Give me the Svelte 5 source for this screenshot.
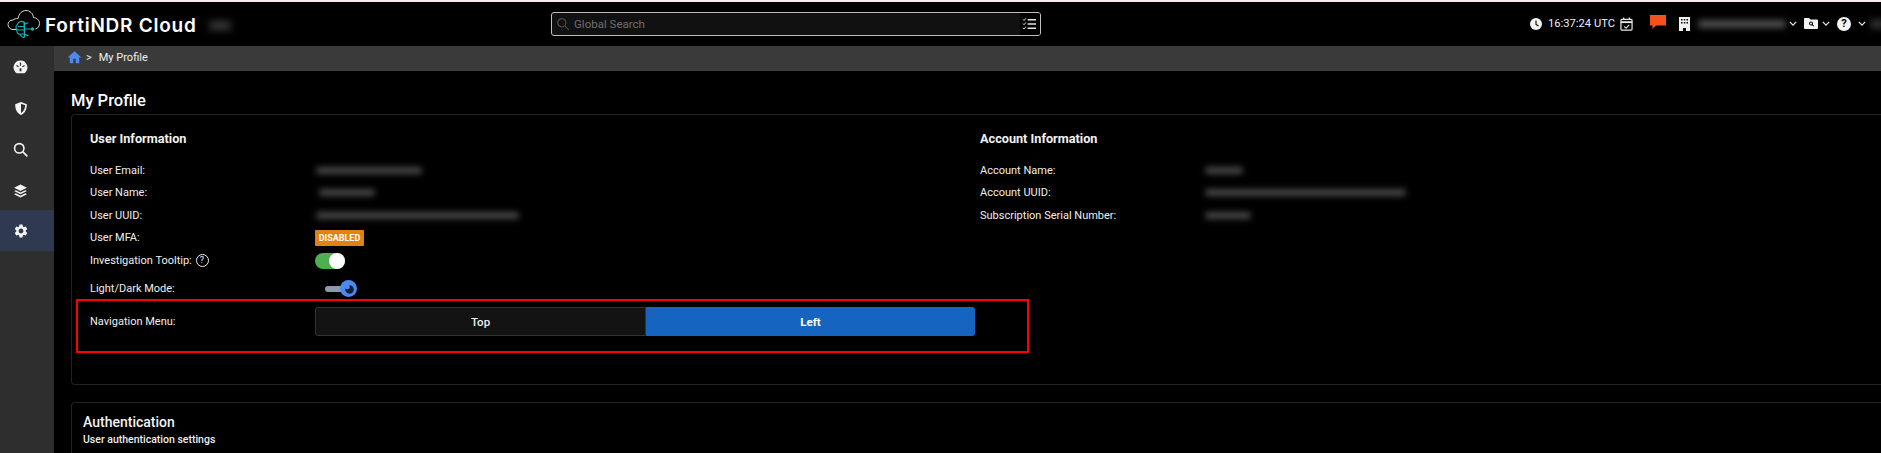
<script>
  const userRows = [
    { label: 'User Email:', blur: 106, left: 1 },
    { label: 'User Name:', blur: 56, left: 4 },
    { label: 'User UUID:', blur: 203, left: 1 }
  ];
  const accRows = [
    { label: 'Account Name:', blur: 38, left: 0 },
    { label: 'Account UUID:', blur: 201, left: 0 },
    { label: 'Subscription Serial Number:', blur: 46, left: 0 }
  ];
  const cog = 'M19.14 12.94c.04-.3.06-.61.06-.94 0-.32-.02-.64-.07-.94l2.03-1.58c.18-.14.23-.41.12-.61l-1.92-3.32c-.12-.22-.37-.29-.59-.22l-2.39.96c-.5-.38-1.03-.7-1.62-.94l-.36-2.54c-.04-.24-.24-.41-.48-.41h-3.84c-.24 0-.43.17-.47.41l-.36 2.54c-.59.24-1.13.57-1.62.94l-2.39-.96c-.22-.08-.47 0-.59.22L2.74 8.87c-.12.21-.08.47.12.61l2.03 1.58c-.05.3-.09.63-.09.94s.02.64.07.94l-2.03 1.58c-.18.14-.23.41-.12.61l1.92 3.32c.12.22.37.29.59.22l2.39-.96c.5.38 1.03.7 1.62.94l.36 2.54c.05.24.24.41.48.41h3.84c.24 0 .44-.17.47-.41l.36-2.54c.59-.24 1.13-.56 1.62-.94l2.39.96c.22.08.47 0 .59-.22l1.92-3.32c.12-.22.07-.47-.12-.61l-2.01-1.58zM12 15.6c-1.98 0-3.6-1.62-3.6-3.6s1.62-3.6 3.6-3.6 3.6 1.62 3.6 3.6-1.62 3.6-3.6 3.6z';
</script>

<div class="page">
  <header class="top">
    <div class="brand">
      <svg class="logo" viewBox="0 0 34 30" width="34" height="30">
        <path d="M10 20.500H6C3 20.500 1 18 1 15.500 1 13 3 11 6 11c1-.8 3-1.800 5-1.300C12 4.500 15 1.500 19 1.500c4 0 7 3 7.500 7 3 .3 6 2.500 6 6 0 2.500-1.500 5-4 5.500" fill="none" stroke="#dcdcdc" stroke-width="1"/>
        <g fill="none" stroke="#18b3bd" stroke-width="1.100">
          <path d="M17 13c-3-1.500-6 0-6.500 2.500-2 1-2 4-.5 5-1 2.500 1 5 3.200 4.700C14 27.500 16 29 17.500 28z"/>
          <path d="M17.500 13v15M11 17.500h6.500M10.500 21h7M13.500 25h4M17.500 15.500l2.500-1.500h1.500M17.500 20h7.500M17.500 25l2.500 1.500h1.500"/>
        </g>
        <circle cx="25.500" cy="20" r="1.700" fill="#18b3bd"/>
      </svg>
      <span class="brand-name">FortiNDR Cloud</span>
      <span class="blur brand-blur"></span>
    </div>

    <div class="search">
      <svg viewBox="0 0 24 24" width="14" height="14" fill="none" stroke="#555" stroke-width="1.800"><circle cx="10" cy="10" r="7"/><path d="M15 15l7 7"/></svg>
      <span class="placeholder">Global Search</span>
      <span class="search-end">
        <svg viewBox="0 0 16 14" width="15" height="14" fill="none" stroke="#e4e4e4"><path d="M6 2.500h9M6 7h9M6 11.500h9" stroke-width="1.500"/><path d="M1 2l1.200 1.300L4.200.8M1 6.500l1.200 1.300L4.200 5.300M1 11l1.200 1.300 2-2.500" stroke-width="1"/></svg>
      </span>
    </div>

    <div class="tools">
      <svg class="clock" viewBox="0 0 24 24" width="12" height="12"><circle cx="12" cy="12" r="12" fill="#f2f2f2"/><path d="M12 5v8l5 3" fill="none" stroke="#000" stroke-width="2.200"/></svg>
      <span class="time">16:37:24 UTC</span>
      <svg class="cal" viewBox="0 0 14 15" width="13" height="14" fill="none" stroke="#e8e8e8" stroke-width="1.300"><rect x="1" y="2.500" width="12" height="11.500" rx="1"/><path d="M1 5.500h12" stroke-width="2"/><path d="M4 .5v2.500M10 .5v2.500"/><path d="M4.500 10l2 2 3.500-3.500" stroke-width="1.100"/></svg>
      <svg class="chat" viewBox="0 0 16 14" width="16" height="14"><path d="M0 0h16v10.500H6L2.500 14V10.500H0z" fill="#f4511e"/></svg>
      <svg class="bld" viewBox="0 0 11 14" width="11" height="14"><path fill-rule="evenodd" d="M0 0h11v14H7v-3H4v3H0zM2 2v1.500h1.500V2zM4.800 2v1.500h1.500V2zM7.500 2v1.500H9V2zM2 5v1.500h1.500V5zM4.800 5v1.500h1.500V5zM7.500 5v1.500H9V5z" fill="#f0f0f0"/></svg>
      <span class="blur user-blur"></span>
      <svg class="chev c1" viewBox="0 0 10 6" width="8" height="5"><path d="M1 1l4 4 4-4" fill="none" stroke="#e8e8e8" stroke-width="1.600"/></svg>
      <svg class="fold" viewBox="0 0 14 11" width="14" height="11"><path fill-rule="evenodd" d="M0 1a1 1 0 0 1 1-1h4l1.500 1.500H13a1 1 0 0 1 1 1V10a1 1 0 0 1-1 1H1a1 1 0 0 1-1-1zM7 3.500a2 2 0 1 0 1.100 3.700L9.500 8.500l.6-.6-1.300-1.400A2 2 0 0 0 7 3.500zM7 4.500a1 1 0 1 1 0 2 1 1 0 0 1 0-2z" fill="#f2f2f2"/></svg>
      <svg class="chev c2" viewBox="0 0 10 6" width="8" height="5"><path d="M1 1l4 4 4-4" fill="none" stroke="#e8e8e8" stroke-width="1.600"/></svg>
      <span class="help">?</span>
      <svg class="chev c3" viewBox="0 0 10 6" width="8" height="5"><path d="M1 1l4 4 4-4" fill="none" stroke="#e8e8e8" stroke-width="1.600"/></svg>
      <span class="blur end-blur"></span>
    </div>
  </header>

  <div class="body">
    <nav class="side">
      <div class="nav-item">
        <svg viewBox="0 0 24 24" width="15" height="15"><path fill-rule="evenodd" d="M12 1a11 11 0 0 1 7.800 18.800L18 21H6l-1.800-1.200A11 11 0 0 1 12 1zM11 4v5h2V4zM5 9.500l3.500 2 1-1.700L6 7.800zM19 9.500l-3.500 2-1-1.700L18 7.800zM10.500 13v5h3v-5z" fill="#f4f4f4"/></svg>
      </div>
      <div class="nav-item">
        <svg viewBox="0 0 24 24" width="14" height="15"><path fill-rule="evenodd" d="M12 1l10 3.500C22 13 19 20 12 23 5 20 2 13 2 4.500zM12 4v16c5-3 7-8 7.200-13.500z" fill="#f4f4f4"/></svg>
      </div>
      <div class="nav-item">
        <svg viewBox="0 0 24 24" width="15" height="15" fill="none" stroke="#f4f4f4" stroke-width="2.600"><circle cx="10" cy="10" r="7.500"/><path d="M15.500 15.500L23 23"/></svg>
      </div>
      <div class="nav-item">
        <svg viewBox="0 0 24 24" width="15" height="14" fill="#f4f4f4"><path d="M12 1l11 5.500L12 12 1 6.500z"/><path d="M4 10.500l8 4 8-4 3 1.500-11 5.500L1 12z"/><path d="M4 16l8 4 8-4 3 1.500L12 23 1 17.500z"/></svg>
      </div>
      <div class="nav-item active">
        <svg viewBox="0 0 24 24" width="16" height="16" fill="#f4f4f4"><path d={cog}/></svg>
      </div>
    </nav>

    <main class="main">
      <div class="crumb">
        <svg viewBox="0 0 24 24" width="15" height="15"><path d="M10 21v-7h4v7h5.500v-9H23L12 2 1 12h3.500v9z" fill="#4d8af0"/></svg>
        <span class="sep">&gt;</span>
        <span class="crumb-text">My Profile</span>
      </div>

      <h1 class="title">My Profile</h1>

      <section class="card info">
        <div class="col user">
          <h2>User Information</h2>
          {#each userRows as r}
            <div class="row">
              <span class="label">{r.label}</span>
              <span class="blur val" style="width:{r.blur}px;margin-left:{r.left}px"></span>
            </div>
          {/each}
          <div class="row">
            <span class="label">User MFA:</span>
            <span class="badge">DISABLED</span>
          </div>
          <div class="row r5">
            <span class="label">Investigation Tooltip: <span class="q">?</span></span>
            <span class="switch"><span class="knob"></span></span>
          </div>
          <div class="row r6">
            <span class="label">Light/Dark Mode:</span>
            <span class="mode">
              <span class="track"></span>
              <svg class="thumb" viewBox="0 0 16 16" width="17" height="17">
                <circle cx="8" cy="8" r="8" fill="#4d8af0"/>
                <circle cx="9" cy="9" r="4" fill="#10203a"/>
                <circle cx="7" cy="6.500" r="2.200" fill="#4d8af0"/>
              </svg>
            </span>
          </div>
          <div class="row r7">
            <span class="label">Navigation Menu:</span>
            <div class="seg">
              <div class="seg-btn off">Top</div>
              <div class="seg-btn on">Left</div>
            </div>
          </div>
        </div>

        <div class="col acct">
          <h2>Account Information</h2>
          {#each accRows as r}
            <div class="row">
              <span class="label">{r.label}</span>
              <span class="blur val" style="width:{r.blur}px;margin-left:{r.left}px"></span>
            </div>
          {/each}
        </div>
      </section>

      <section class="card auth">
        <h3>Authentication</h3>
        <p>User authentication settings</p>
      </section>
    </main>
  </div>

  <div class="annot"></div>
</div>

<style>
  :global(body) {
    margin: 0;
    background: #000;
  }
  .page {
    position: relative;
    width: 1881px;
    height: 453px;
    overflow: hidden;
    background: #000;
    color: #eee;
    font-family: Roboto, "Liberation Sans", sans-serif;
    font-size: 11px;
  }
  .top {
    height: 46px;
    box-sizing: border-box;
    border-top: 2px solid #f8ecec;
    display: flex;
    align-items: center;
    background: #000;
  }
  .brand {
    width: 551px;
    flex: none;
    display: flex;
    align-items: center;
    padding-left: 7px;
    box-sizing: border-box;
  }
  .logo { flex: none; }
  .brand-name {
    font-family: Inter, "Open Sans", sans-serif;
    font-weight: 600;
    font-size: 19px;
    letter-spacing: 0.75px;
    color: #fff;
    margin-left: 4px;
    padding-top: 2px;
  }
  .blur {
    display: inline-block;
    background: #6a6a6a;
    filter: blur(3px);
    border-radius: 3px;
  }
  .brand-blur {
    width: 22px;
    height: 7px;
    margin-left: 12px;
    margin-top: 2px;
    background: #4a4a4a;
    filter: blur(4px);
  }
  .search {
    width: 490px;
    height: 24px;
    box-sizing: border-box;
    border: 1px solid #bdbdbd;
    border-radius: 3px;
    background: #111;
    display: flex;
    align-items: center;
    padding-left: 4px;
    flex: none;
    overflow: hidden;
  }
  .placeholder {
    margin-left: 4px;
    color: #6f6f6f;
    font-size: 11.500px;
  }
  .search-end {
    margin-left: auto;
    width: 18px;
    height: 100%;
    background: #000;
    display: flex;
    align-items: center;
    padding-right: 2px;
    justify-content: center;
  }
  .tools {
    flex: 1;
    display: flex;
    align-items: center;
    padding-left: 489px;
    padding-bottom: 1px;
    white-space: nowrap;
    min-width: 0;
  }
  .clock { flex: none; }
  .time {
    margin-left: 6px;
    font-size: 11.200px;
    color: #e8f0ff;
  }
  .cal { margin-left: 5px; flex: none; }
  .chat { margin-left: 17px; position: relative; top: -2px; flex: none; }
  .bld { margin-left: 13px; flex: none; }
  .user-blur { width: 88px; height: 8px; margin-left: 8px; background: #4e4e4e; flex: none; }
  .chev { flex: none; }
  .chev.c1 { margin-left: 3px; }
  .fold { margin-left: 7px; flex: none; }
  .chev.c2 { margin-left: 4px; }
  .help {
    margin-left: 7px;
    width: 14px;
    height: 14px;
    flex: none;
    border-radius: 50%;
    background: #f4f4f4;
    color: #000;
    font-weight: 700;
    font-size: 11px;
    line-height: 14px;
    text-align: center;
  }
  .chev.c3 { margin-left: 7px; }
  .end-blur { width: 20px; height: 10px; margin-left: 4px; background: #2a2a2a; flex: none; }
  .body {
    display: flex;
    height: 407px;
  }
  .side {
    width: 54px;
    flex: none;
    background: #2e2e2e;
    display: flex;
    flex-direction: column;
    height: 100%;
    box-sizing: border-box;
  }
  .nav-item {
    height: 41px;
    display: flex;
    align-items: center;
    justify-content: center;
    padding-right: 13px;
    padding-top: 2px;
    flex: none;
    box-sizing: border-box;
  }
  .nav-item.active { background: #2f3a50; padding-top: 0; }
  .main {
    flex: 1;
    min-width: 0;
  }
  .crumb {
    height: 25px;
    background: #3a3a3a;
    display: flex;
    align-items: center;
    padding-left: 13px;
    padding-bottom: 2px;
    box-sizing: border-box;
  }
  .sep { margin-left: 4px; font-size: 11px; color: #eee; }
  .crumb-text { margin-left: 7px; font-size: 11px; color: #f0f0f0; }
  .title {
    margin: 20px 0 0 17px;
    font-size: 16.500px;
    line-height: 19px;
    font-weight: 500;
    color: #fff;
    height: 23px;
  }
  .card {
    margin-left: 17px;
    box-sizing: border-box;
    border: 1px solid #222;
    border-right: none;
    border-radius: 4px 0 0 4px;
    width: 1900px;
  }
  .info {
    height: 271px;
    display: flex;
    padding: 16px 0 0 18px;
  }
  .col.user { width: 890px; flex: none; }
  h2 {
    margin: 0 0 12px;
    font-size: 12.700px;
    line-height: 16px;
    font-weight: 700;
    color: #f2f2f2;
  }
  .row {
    display: flex;
    align-items: center;
    height: 22.500px;
  }
  .label {
    width: 225px;
    flex: none;
    font-size: 11px;
    color: #efefef;
    display: flex;
    align-items: center;
    white-space: pre;
  }
  .val {
    height: 7px;
    background: #484848;
  }
  .q {
    width: 11px;
    height: 11px;
    border: 1px solid #eee;
    border-radius: 50%;
    font-size: 9px;
    line-height: 11px;
    text-align: center;
    margin-left: 1px;
  }
  .badge {
    background: #e08214;
    color: #fff;
    font-size: 9px;
    font-weight: 700;
    height: 16px;
    line-height: 16px;
    border-radius: 1px;
    width: 49px;
    text-align: center;
  }
  .row.r5 { height: 23px; }
  .switch {
    width: 30px;
    height: 16px;
    border-radius: 8px;
    background: #4caf50;
    position: relative;
  }
  .knob {
    position: absolute;
    right: 0;
    top: 0;
    width: 16px;
    height: 16px;
    border-radius: 50%;
    background: #fff;
  }
  .row.r6 { height: 30px; padding-top: 3px; box-sizing: border-box; }
  .mode {
    position: relative;
    display: block;
    width: 32px;
    height: 17px;
    margin-left: 10px;
  }
  .track {
    position: absolute;
    left: 0;
    top: 6px;
    width: 22px;
    height: 6px;
    border-radius: 3px;
    background: #8e99ab;
  }
  .thumb {
    position: absolute;
    right: 0;
    top: 0;
  }
  .row.r7 {
    height: 29px;
    margin-top: 5px;
  }
  .seg {
    display: flex;
    width: 660px;
    height: 29px;
  }
  .seg-btn {
    flex: 1;
    display: flex;
    align-items: center;
    justify-content: center;
    font-size: 11.500px;
    font-weight: 500;
    box-sizing: border-box;
  }
  .off {
    background: #131313;
    border: 1px solid #333;
    border-radius: 3px 0 0 3px;
    color: #eee;
  }
  .on {
    background: #1565c0;
    color: #fff;
    font-weight: 700;
    border-radius: 0 3px 3px 0;
  }
  .auth {
    margin-top: 17px;
    height: 60px;
    padding: 10px 11px;
  }
  h3 {
    margin: 0;
    font-size: 14px;
    line-height: 18px;
    font-weight: 500;
    color: #f2f2f2;
  }
  .auth p {
    margin: 2px 0 0;
    font-size: 10.500px;
    font-weight: 500;
    color: #eee;
  }
  .annot {
    position: absolute;
    left: 76px;
    top: 299px;
    width: 953px;
    height: 54px;
    box-sizing: border-box;
    border: 2px solid #f00;
  }
</style>
